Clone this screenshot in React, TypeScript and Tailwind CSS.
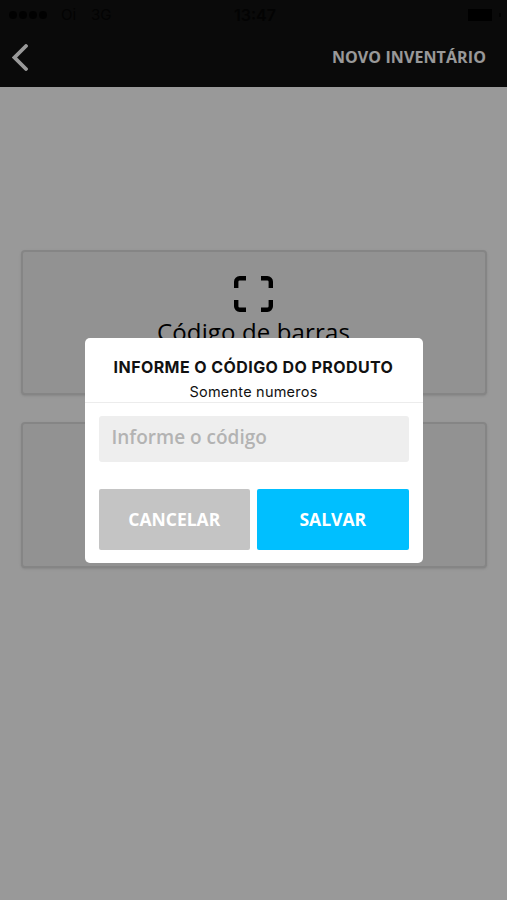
import { useState } from "react";

const StatusBar = () => (
  <div className="flex h-[29px] items-center justify-between pl-[9px] pr-[6px] font-['Inter',sans-serif] text-[15px] leading-none text-[#050505]">
    <div className="flex w-[160px] items-center">
      <div className="flex gap-[2px]">
        <span className="size-[8px] rounded-full bg-[#030303]" />
        <span className="size-[8px] rounded-full bg-[#030303]" />
        <span className="size-[8px] rounded-full bg-[#030303]" />
        <span className="size-[8px] rounded-full bg-[#030303]" />
      </div>
      <span className="ml-[14px]">Oi</span>
      <span className="ml-[15px]">3G</span>
    </div>
    <span className="text-[16px] font-semibold">13:47</span>
    <div className="flex w-[160px] items-center justify-end">
      <span className="h-[12px] w-[24px] bg-black" />
      <span className="ml-[7px] h-[4px] w-[2px] bg-[#050505]" />
    </div>
  </div>
);

const ScanIcon = () => (
  <svg width="39" height="36" viewBox="0 0 39 36" fill="none" stroke="#000" strokeWidth="4.4">
    <path d="M2.2 12V5.7a3.5 3.5 0 0 1 3.5-3.5H12" />
    <path d="M27 2.2h6.3a3.5 3.5 0 0 1 3.5 3.5V12" />
    <path d="M36.8 24v6.3a3.5 3.5 0 0 1-3.5 3.5H27" />
    <path d="M12 33.8H5.7a3.5 3.5 0 0 1-3.5-3.5V24" />
  </svg>
);

export default function App() {
  const [code, setCode] = useState("");

  return (
    <div className="relative h-[900px] w-full overflow-hidden bg-white font-['Open_Sans',sans-serif]">
      <header className="h-[87px] bg-[#111111]">
        <StatusBar />
        <div className="flex h-[57px] items-center justify-between pl-[12px] pr-[20px]">
          <button aria-label="Voltar">
            <svg width="16" height="27" viewBox="0 0 16 27" fill="none" stroke="#fff" strokeWidth="3.8" strokeLinecap="round">
              <path d="M14 2L2.5 13.5 14 25" />
            </svg>
          </button>
          <h1 className="pr-[1px] pb-[2px] text-[16px] font-bold tracking-[0.1px] text-white">NOVO INVENTÁRIO</h1>
        </div>
      </header>

      <main className="flex flex-col gap-[27px] pt-[163px] pr-[20px] pl-[21px]">
        <div className="flex h-[145px] flex-col items-center rounded-[4px] border-2 border-[#dedede] bg-[#f3f3f3] pt-[24px] pr-[1px] shadow-sm">
          <ScanIcon />
          <span className="mt-[2px] text-[24px] leading-[36px] tracking-[0.14px] text-black">Código de barras</span>
        </div>
        <div className="h-[146px] rounded-[4px] border-2 border-[#dedede] bg-[#f3f3f3] shadow-sm" />
      </main>

      <div className="absolute inset-0 flex justify-center bg-black/40 pt-[338px]">
        <div className="h-[225px] w-[338px] rounded-[5px] bg-white">
          <div className="flex h-[65px] flex-col items-center border-b border-[#ececec] pt-[18px] font-['Inter',sans-serif] text-[#111111]">
            <h2 className="text-[16px] leading-[22px] font-bold tracking-[0.42px]">INFORME O CÓDIGO DO PRODUTO</h2>
            <p className="mt-[4px] text-[14.5px] leading-[20px] tracking-[0.22px]">Somente numeros</p>
          </div>
          <div className="px-[14px] pt-[13px]">
            <input
              value={code}
              onChange={(e) => setCode(e.target.value)}
              placeholder="Informe o código"
              className="block h-[46px] w-full rounded-[3px] bg-[#eeeeee] px-[13px] pb-[5px] text-[19px] font-semibold text-[#333333] outline-none placeholder:text-[#b3b3b3]"
            />
            <div className="mt-[27px] flex gap-[7px] text-[17.5px] font-bold text-white">
              <button className="h-[61px] flex-1 rounded-[2px] bg-[#c4c4c4]">CANCELAR</button>
              <button className="h-[61px] flex-1 rounded-[2px] bg-[#00bfff]">SALVAR</button>
            </div>
          </div>
        </div>
      </div>
    </div>
  );
}
